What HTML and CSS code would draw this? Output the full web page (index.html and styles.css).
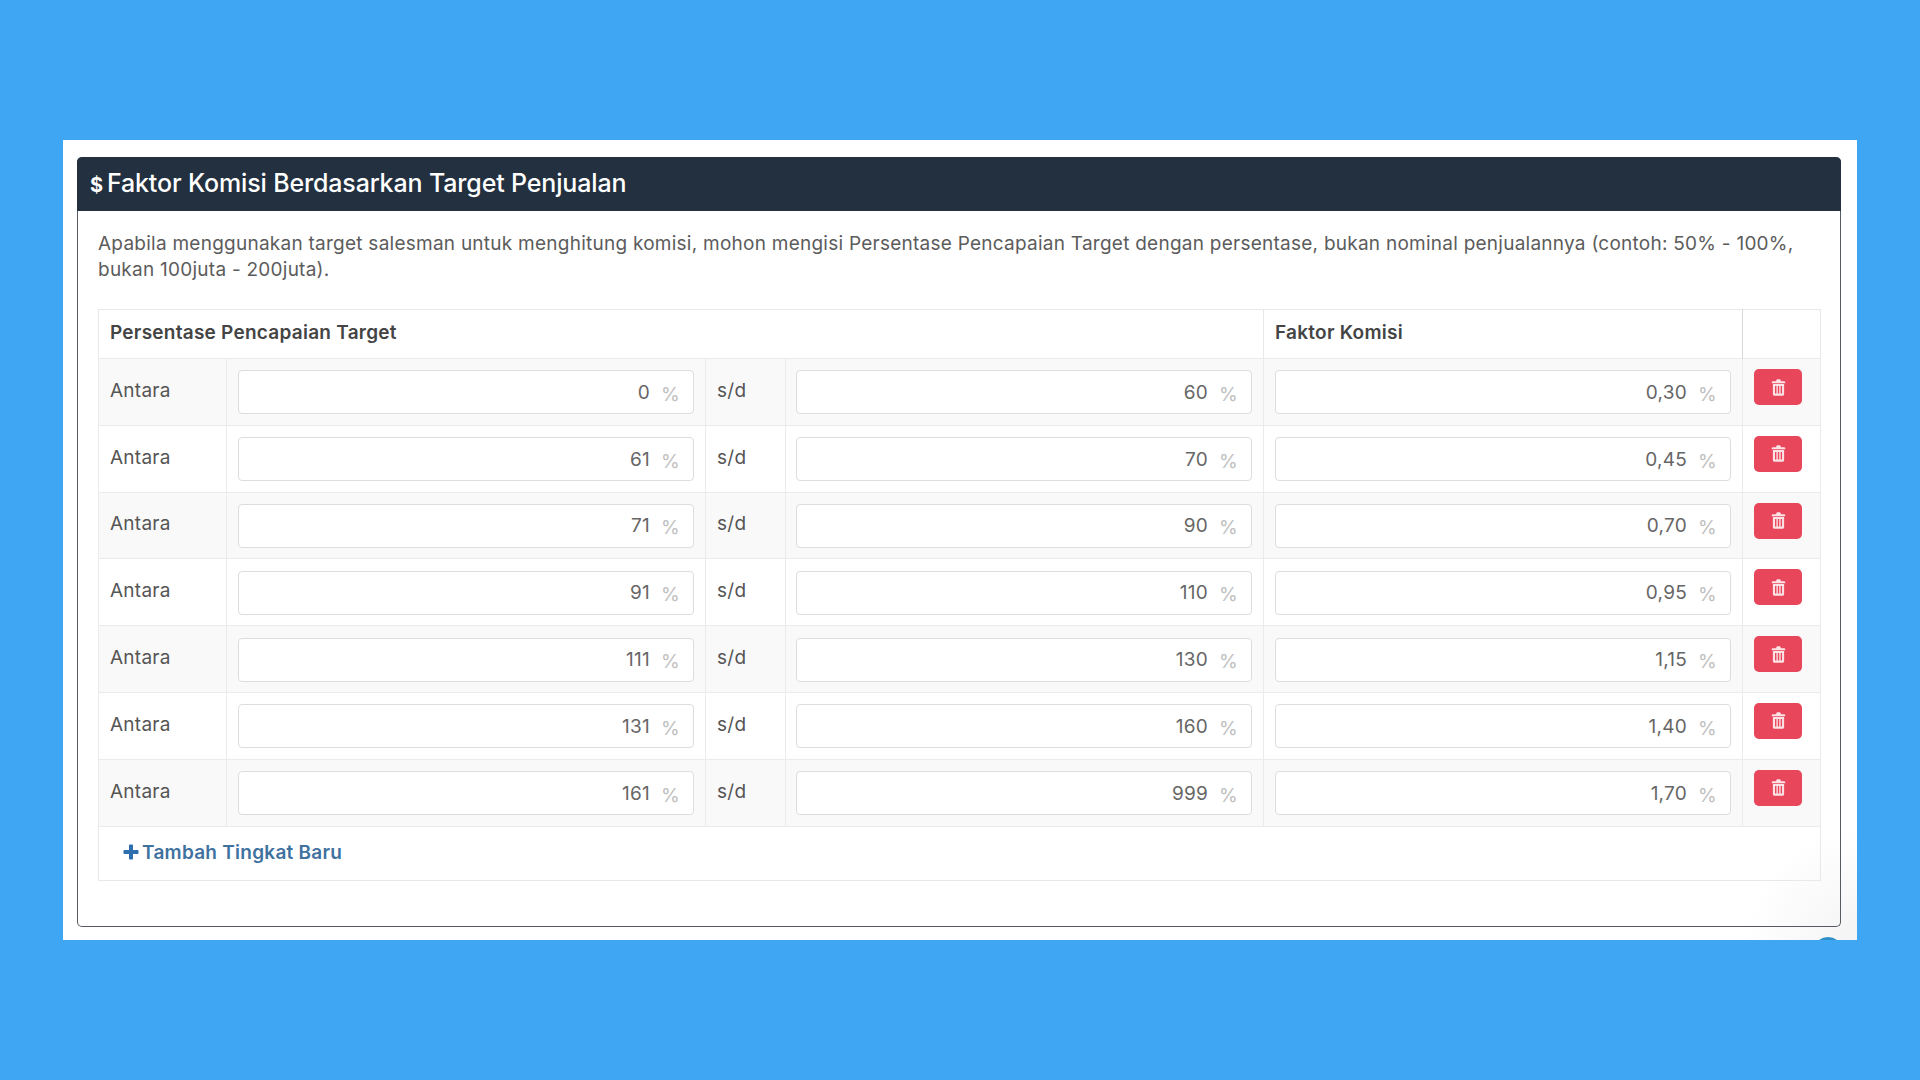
FILE: index.html
```html
<!DOCTYPE html>
<html lang="id">
<head>
<meta charset="utf-8">
<title>Faktor Komisi</title>
<link rel="stylesheet" href="styles.css">
</head>
<body>
<svg class="sprite" width="0" height="0" aria-hidden="true">
  <symbol id="trash" viewBox="0 0 16 18">
    <path fill="currentColor" fill-rule="evenodd" d="M5.600 1.600C5.800.7 6.400.2 7.200.2h1.600c.8 0 1.400.5 1.600 1.400l.2.7h3.600c.6 0 1 .4 1 1v1.200H.8V3.300c0-.6.4-1 1-1h3.600zM2 5.300h12v10.500c0 1.100-.8 2-1.900 2H3.900c-1.100 0-1.900-.9-1.900-2zm2.300 2v8h1.500v-8zm3 0v8h1.500v-8zm3 0v8h1.500v-8z"/>
  </symbol>
</svg>
<main class="panel">
  <section class="card">
    <h2 class="card-title"><span class="dollar">$</span>Faktor Komisi Berdasarkan Target Penjualan</h2>
    <div class="card-body">
      <p class="note">Apabila menggunakan target salesman untuk menghitung komisi, mohon mengisi Persentase Pencapaian Target dengan persentase, bukan nominal penjualannya (contoh: 50% - 100%, bukan 100juta - 200juta).</p>
      <table class="tiers">
        <colgroup>
          <col class="c-label"><col class="c-input"><col class="c-sep"><col class="c-mid"><col class="c-input"><col class="c-action">
        </colgroup>
        <thead>
          <tr><th colspan="4">Persentase Pencapaian Target</th><th>Faktor Komisi</th><th class="strong-left"></th></tr>
        </thead>
        <tbody>
          <tr>
            <td class="txt">Antara</td>
            <td><div class="field"><span class="val">0</span><span class="unit">%</span></div></td>
            <td class="txt">s/d</td>
            <td class="mid"><div class="field"><span class="val">60</span><span class="unit">%</span></div></td>
            <td><div class="field"><span class="val">0,30</span><span class="unit">%</span></div></td>
            <td class="strong-left"><button class="del" type="button" aria-label="Hapus"><svg class="ico"><use href="#trash"/></svg></button></td>
          </tr>
          <tr>
            <td class="txt">Antara</td>
            <td><div class="field"><span class="val">61</span><span class="unit">%</span></div></td>
            <td class="txt">s/d</td>
            <td class="mid"><div class="field"><span class="val">70</span><span class="unit">%</span></div></td>
            <td><div class="field"><span class="val">0,45</span><span class="unit">%</span></div></td>
            <td class="strong-left"><button class="del" type="button" aria-label="Hapus"><svg class="ico"><use href="#trash"/></svg></button></td>
          </tr>
          <tr>
            <td class="txt">Antara</td>
            <td><div class="field"><span class="val">71</span><span class="unit">%</span></div></td>
            <td class="txt">s/d</td>
            <td class="mid"><div class="field"><span class="val">90</span><span class="unit">%</span></div></td>
            <td><div class="field"><span class="val">0,70</span><span class="unit">%</span></div></td>
            <td class="strong-left"><button class="del" type="button" aria-label="Hapus"><svg class="ico"><use href="#trash"/></svg></button></td>
          </tr>
          <tr>
            <td class="txt">Antara</td>
            <td><div class="field"><span class="val">91</span><span class="unit">%</span></div></td>
            <td class="txt">s/d</td>
            <td class="mid"><div class="field"><span class="val">110</span><span class="unit">%</span></div></td>
            <td><div class="field"><span class="val">0,95</span><span class="unit">%</span></div></td>
            <td class="strong-left"><button class="del" type="button" aria-label="Hapus"><svg class="ico"><use href="#trash"/></svg></button></td>
          </tr>
          <tr>
            <td class="txt">Antara</td>
            <td><div class="field"><span class="val">111</span><span class="unit">%</span></div></td>
            <td class="txt">s/d</td>
            <td class="mid"><div class="field"><span class="val">130</span><span class="unit">%</span></div></td>
            <td><div class="field"><span class="val">1,15</span><span class="unit">%</span></div></td>
            <td class="strong-left"><button class="del" type="button" aria-label="Hapus"><svg class="ico"><use href="#trash"/></svg></button></td>
          </tr>
          <tr>
            <td class="txt">Antara</td>
            <td><div class="field"><span class="val">131</span><span class="unit">%</span></div></td>
            <td class="txt">s/d</td>
            <td class="mid"><div class="field"><span class="val">160</span><span class="unit">%</span></div></td>
            <td><div class="field"><span class="val">1,40</span><span class="unit">%</span></div></td>
            <td class="strong-left"><button class="del" type="button" aria-label="Hapus"><svg class="ico"><use href="#trash"/></svg></button></td>
          </tr>
          <tr>
            <td class="txt">Antara</td>
            <td><div class="field"><span class="val">161</span><span class="unit">%</span></div></td>
            <td class="txt">s/d</td>
            <td class="mid"><div class="field"><span class="val">999</span><span class="unit">%</span></div></td>
            <td><div class="field"><span class="val">1,70</span><span class="unit">%</span></div></td>
            <td class="strong-left"><button class="del" type="button" aria-label="Hapus"><svg class="ico"><use href="#trash"/></svg></button></td>
          </tr>
        </tbody>
        <tfoot>
          <tr>
            <td colspan="6">
              <a class="add" href="#"><svg class="plus" viewBox="0 0 16 16" aria-hidden="true"><path fill="currentColor" d="M6 1.500c0-.6.4-1 1-1h2c.6 0 1 .4 1 1V6h4.500c.6 0 1 .4 1 1v2c0 .6-.4 1-1 1H10v4.500c0 .6-.4 1-1 1H7c-.6 0-1-.4-1-1V10H1.500c-.6 0-1-.4-1-1V7c0-.6.4-1 1-1H6z"/></svg>Tambah Tingkat Baru</a>
            </td>
          </tr>
        </tfoot>
      </table>
    </div>
  </section>
  <span class="corner-bump"></span>
</main>
</body>
</html>
```
FILE: styles.css
```css
* { box-sizing: border-box; }
html, body { height: 100%; }
body {
  margin: 0;
  background: #3fa6f3;
  display: flex;
  align-items: center;
  justify-content: center;
  font-family: "Inter", "Liberation Sans", sans-serif;
  font-size: 19px;
  letter-spacing: 0.25px;
  color: #555;
}
.sprite { position: absolute; }
.panel {
  position: relative;
  width: 1794px;
  height: 800px;
  background: radial-gradient(circle at 100% 100%, #f4f4f4, #fff 110px);
  padding: 17px 16px 13px 14px;
  overflow: hidden;
}
.corner-bump {
  position: absolute;
  right: 14px;
  bottom: -27px;
  width: 30px;
  height: 30px;
  border-radius: 50%;
  background: #2f8fc9;
}
.card {
  height: 770px;
  border: 1px solid #555b61;
  border-top: 0;
  border-radius: 5px;
}
.card-title {
  margin: 0 -1px;
  height: 54px;
  background: #22303f;
  color: #fff;
  border-radius: 5px 5px 0 0;
  font-size: 25px;
  font-weight: 500;
  line-height: 52px;
  padding-left: 13px;
  letter-spacing: -0.15px;
}
.dollar { font-weight: 700; font-size: 20px; margin-right: 4px; }
.card-body { padding: 20px 20px 0; }
.note {
  margin: 0 0 26px;
  line-height: 26px;
  color: #5c5c5c;
}
.tiers {
  table-layout: fixed;
  width: 1722px;
  border-collapse: collapse;
  border: 1px solid #e8e8e8;
}
.c-label { width: 128px; }
.c-input { width: 479px; }
.c-mid { width: 478px; }
.c-sep { width: 80px; }
.c-action { width: 78px; }
.tiers th {
  height: 49px;
  padding: 0 11px 3px;
  text-align: left;
  font-weight: 600;
  color: #444;
  border-left: 1px solid #e8e8e8;
}
.tiers tbody td {
  height: 66.8px;
  padding: 11px 11px 10px;
  border: 1px solid #ebebeb;
  vertical-align: middle;
}
.tiers tbody td.txt { padding-top: 9px; padding-bottom: 12px; }
.tiers tbody td.mid { padding-left: 10px; }
.tiers tbody tr:nth-child(odd) td { background: #f9f9f9; }
.tiers th.strong-left, .tiers tbody td.strong-left {
  border-left: 1px solid #d8d8d8;
  vertical-align: top;
  padding-top: 10px;
}
.tiers tfoot td {
  height: 54px;
  padding: 0 24px;
  border-top: 1px solid #e8e8e8;
}
.field {
  display: flex;
  align-items: center;
  justify-content: flex-end;
  height: 44px;
  padding: 0 13px;
  background: #fff;
  border: 1px solid #ddd;
  border-radius: 4px;
  color: #666;
}
.val { margin-right: 11px; }
.unit { width: 19px; text-align: right; color: #c0c0c0; padding-top: 4px; }
.del {
  display: flex;
  align-items: center;
  justify-content: center;
  width: 48px;
  height: 36px;
  padding: 0;
  border: 0;
  border-radius: 5px;
  background: #e8465a;
  color: #fde3e6;
}
.ico { width: 15px; height: 17px; }
.add {
  display: inline-flex;
  align-items: center;
  gap: 3px;
  color: #3f729f;
  font-weight: 600;
  text-decoration: none;
}
.plus { width: 16px; height: 16px; color: #2f6fb0; }
```
